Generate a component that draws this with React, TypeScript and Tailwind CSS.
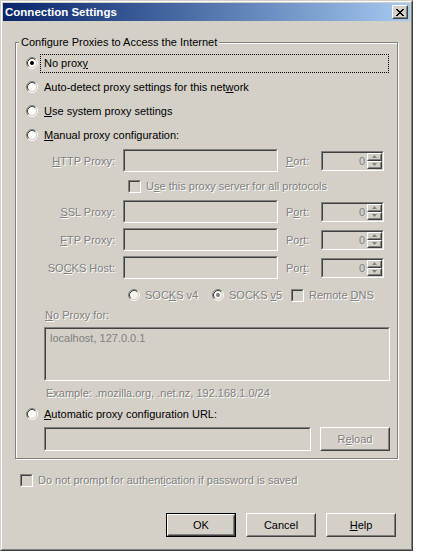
import React from "react";

const FONT = "font-['Liberation_Sans',Arial,sans-serif]";
const DIS = "text-[#808080] [text-shadow:1px_1px_0_#ffffff]";

type BoxProps = {
  className?: string;
  innerClassName?: string;
  children?: React.ReactNode;
};

// Classic 3D sunken frame (text fields, check boxes)
function Sunken({ className = "", innerClassName = "", children }: BoxProps) {
  return (
    <div
      className={`shrink-0 border border-t-[#808080] border-l-[#808080] border-r-white border-b-white ${className}`}
    >
      <div
        className={`h-full w-full border border-t-[#404040] border-l-[#404040] border-r-[#d4d0c8] border-b-[#d4d0c8] ${innerClassName}`}
      >
        {children}
      </div>
    </div>
  );
}

// Classic 3D raised frame (push buttons)
function Raised({ className = "", innerClassName = "", children }: BoxProps) {
  return (
    <div
      className={`shrink-0 border border-t-white border-l-white border-r-[#404040] border-b-[#404040] ${className}`}
    >
      <div
        className={`h-full w-full border border-t-[#d4d0c8] border-l-[#d4d0c8] border-r-[#808080] border-b-[#808080] ${innerClassName}`}
      >
        {children}
      </div>
    </div>
  );
}

function Radio({ checked = false, disabled = false }: { checked?: boolean; disabled?: boolean }) {
  return (
    <svg width="12" height="12" viewBox="0 0 12 12" className="shrink-0">
      <circle cx="6" cy="6" r="4.2" fill={disabled ? "#f4f3f0" : "#ffffff"} />
      <path d="M2.11 9.89 A5.5 5.5 0 0 1 9.89 2.11" fill="none" stroke="#808080" strokeWidth="1" />
      <path d="M9.89 2.11 A5.5 5.5 0 0 1 2.11 9.89" fill="none" stroke="#ffffff" strokeWidth="1" />
      <path d="M2.82 9.18 A4.5 4.5 0 0 1 9.18 2.82" fill="none" stroke="#404040" strokeWidth="1" />
      <path d="M9.18 2.82 A4.5 4.5 0 0 1 2.82 9.18" fill="none" stroke="#d4d0c8" strokeWidth="1" />
      {checked && <circle cx="6" cy="6" r="2" fill={disabled ? "#808080" : "#000000"} />}
    </svg>
  );
}

function Check() {
  return <Sunken className="w-[13px] h-[13px]" innerClassName="bg-[#d4d0c8]" />;
}

function Arrow({ up }: { up: boolean }) {
  return (
    <svg width="5" height="3" viewBox="0 0 5 3">
      <path d={up ? "M2.5 0 L5 3 L0 3 Z" : "M0 0 L5 0 L2.5 3 Z"} fill="#808080" />
    </svg>
  );
}

function Spinner() {
  return (
    <Sunken className="w-[63px] h-[20px]" innerClassName="bg-[#d4d0c8] flex">
      <div className="flex-1 text-right pr-[2px] text-[#808080] leading-[16px]">0</div>
      <div className="w-[15px] flex flex-col">
        <Raised className="h-[8px]" innerClassName="flex items-center justify-center">
          <Arrow up />
        </Raised>
        <Raised className="h-[8px]" innerClassName="flex items-center justify-center">
          <Arrow up={false} />
        </Raised>
      </div>
    </Sunken>
  );
}

function ProxyRow({
  label,
  port,
  className = "",
}: {
  label: React.ReactNode;
  port: React.ReactNode;
  className?: string;
}) {
  return (
    <div className={`h-[23px] flex items-center ${className}`}>
      <div className={`w-[99px] text-right ${DIS}`}>{label}</div>
      <Sunken className="ml-[8px] w-[155px] h-[23px]" innerClassName="bg-[#d4d0c8]" />
      <div className={`ml-[8px] w-[35px] ${DIS}`}>{port}</div>
      <Spinner />
    </div>
  );
}

function CloseGlyph() {
  const rows = ["XX....XX", ".XX..XX.", "..XXXX..", "...XX...", "..XXXX..", ".XX..XX.", "XX....XX"];
  return (
    <svg width="8" height="7" viewBox="0 0 8 7" shapeRendering="crispEdges">
      {rows.flatMap((r, y) =>
        r.split("").map((c, x) => (c === "X" ? <rect key={`${x}-${y}`} x={x} y={y} width="1" height="1" fill="#000" /> : null))
      )}
    </svg>
  );
}

export default function App() {
  return (
    <div
      className={`w-[413px] h-[551px] border border-t-[#d4d0c8] border-l-[#d4d0c8] border-r-[#404040] border-b-[#404040] ${FONT} text-[11px] leading-[14px] text-black`}
    >
      <div className="h-full border border-t-white border-l-white border-r-[#808080] border-b-[#808080] bg-[#d4d0c8] p-[1px] flex flex-col">
        {/* title bar */}
        <div className="h-[18px] shrink-0 flex items-center bg-linear-to-r from-[#0a246a] to-[#a6caf0]">
          <div className="pl-[2px] flex-1 text-white font-bold text-[11.5px]">Connection Settings</div>
          <Raised className="w-[16px] h-[14px] mr-[2px]" innerClassName="bg-[#d4d0c8] flex items-center justify-center">
            <CloseGlyph />
          </Raised>
        </div>

        {/* proxy group */}
        <div className="relative ml-[12px] mt-[21px] w-[383px] border border-[#808080] shadow-[1px_1px_0_#ffffff,inset_1px_1px_0_#ffffff] pt-[8px] pb-[7px] flex flex-col">
          <div className="absolute left-[3px] top-[-8px] px-[2px] bg-[#d4d0c8] leading-[14px]">
            Configure Proxies to Access the Internet
          </div>

          <div className="h-[24px] flex items-center pl-[10px]">
            <Radio checked />
            <div className="ml-[2px] w-[349px] h-[19px] border border-dotted border-black flex items-center pl-[3px]">
              No prox<u>y</u>
            </div>
          </div>
          <div className="h-[24px] flex items-center pl-[10px]">
            <Radio />
            <span className="ml-[6px]">
              Auto-detect proxy settings for this net<u>w</u>ork
            </span>
          </div>
          <div className="h-[24px] flex items-center pl-[10px]">
            <Radio />
            <span className="ml-[6px]">
              <u>U</u>se system proxy settings
            </span>
          </div>
          <div className="h-[24px] flex items-center pl-[10px]">
            <Radio />
            <span className="ml-[6px]">
              <u>M</u>anual proxy configuration:
            </span>
          </div>

          <ProxyRow
            className="mt-[2px]"
            label={
              <>
                <u>H</u>TTP Proxy:
              </>
            }
            port={
              <>
                <u>P</u>ort:
              </>
            }
          />

          <div className="h-[28px] flex items-center pl-[112px]">
            <Check />
            <span className={`ml-[5px] ${DIS}`}>
              U<u>s</u>e this proxy server for all protocols
            </span>
          </div>

          <ProxyRow
            label={
              <>
                <u>S</u>SL Proxy:
              </>
            }
            port={
              <>
                P<u>o</u>rt:
              </>
            }
          />
          <ProxyRow
            className="mt-[5px]"
            label={
              <>
                <u>F</u>TP Proxy:
              </>
            }
            port={
              <>
                Po<u>r</u>t:
              </>
            }
          />
          <ProxyRow
            className="mt-[5px]"
            label={
              <>
                SO<u>C</u>KS Host:
              </>
            }
            port={
              <>
                Por<u>t</u>:
              </>
            }
          />

          <div className="mt-[4px] h-[24px] flex items-center pl-[112px]">
            <div className="w-[84px] flex items-center">
              <Radio disabled />
              <span className={`ml-[5px] ${DIS}`}>
                SOC<u>K</u>S v4
              </span>
            </div>
            <div className="w-[79px] flex items-center">
              <Radio disabled checked />
              <span className={`ml-[5px] ${DIS}`}>
                SOCKS <u>v</u>5
              </span>
            </div>
            <Check />
            <span className={`ml-[5px] ${DIS}`}>
              Remote <u>D</u>NS
            </span>
          </div>

          <div className={`h-[16px] leading-[16px] pl-[29px] ${DIS}`}>
            <u>N</u>o Proxy for:
          </div>
          <Sunken className="mt-[4px] ml-[28px] w-[346px] h-[54px]" innerClassName="bg-[#d4d0c8] pl-[4px] pt-[2px] text-[#808080]">
            localhost, 127.0.0.1
          </Sunken>

          <div className={`h-[24px] flex items-center pl-[30px] ${DIS}`}>
            Example: .mozilla.org, .net.nz, 192.168.1.0/24
          </div>

          <div className="h-[18px] flex items-center pl-[10px]">
            <Radio />
            <span className="ml-[6px]">
              <u>A</u>utomatic proxy configuration URL:
            </span>
          </div>

          <div className="mt-[4px] h-[24px] flex pl-[28px]">
            <Sunken className="w-[267px] h-[24px]" innerClassName="bg-[#d4d0c8]" />
            <Raised className="ml-[9px] w-[70px] h-[24px]" innerClassName={`flex items-center justify-center ${DIS}`}>
              <span>
                R<u>e</u>load
              </span>
            </Raised>
          </div>
        </div>

        {/* authentication option */}
        <div className="mt-[11px] h-[20px] flex items-center pl-[17px]">
          <Check />
          <span className={`ml-[5px] ${DIS}`}>
            Do not prompt for authent<u>i</u>cation if password is saved
          </span>
        </div>

        {/* dialog buttons */}
        <div className="mt-[23px] flex justify-end pr-[14px] gap-[10px]">
          <div className="w-[70px] h-[24px] border border-black">
            <Raised className="h-full w-full" innerClassName="flex items-center justify-center">
              OK
            </Raised>
          </div>
          <Raised className="w-[70px] h-[24px]" innerClassName="flex items-center justify-center">
            Cancel
          </Raised>
          <Raised className="w-[70px] h-[24px]" innerClassName="flex items-center justify-center">
            <span>
              <u>H</u>elp
            </span>
          </Raised>
        </div>
      </div>
    </div>
  );
}
